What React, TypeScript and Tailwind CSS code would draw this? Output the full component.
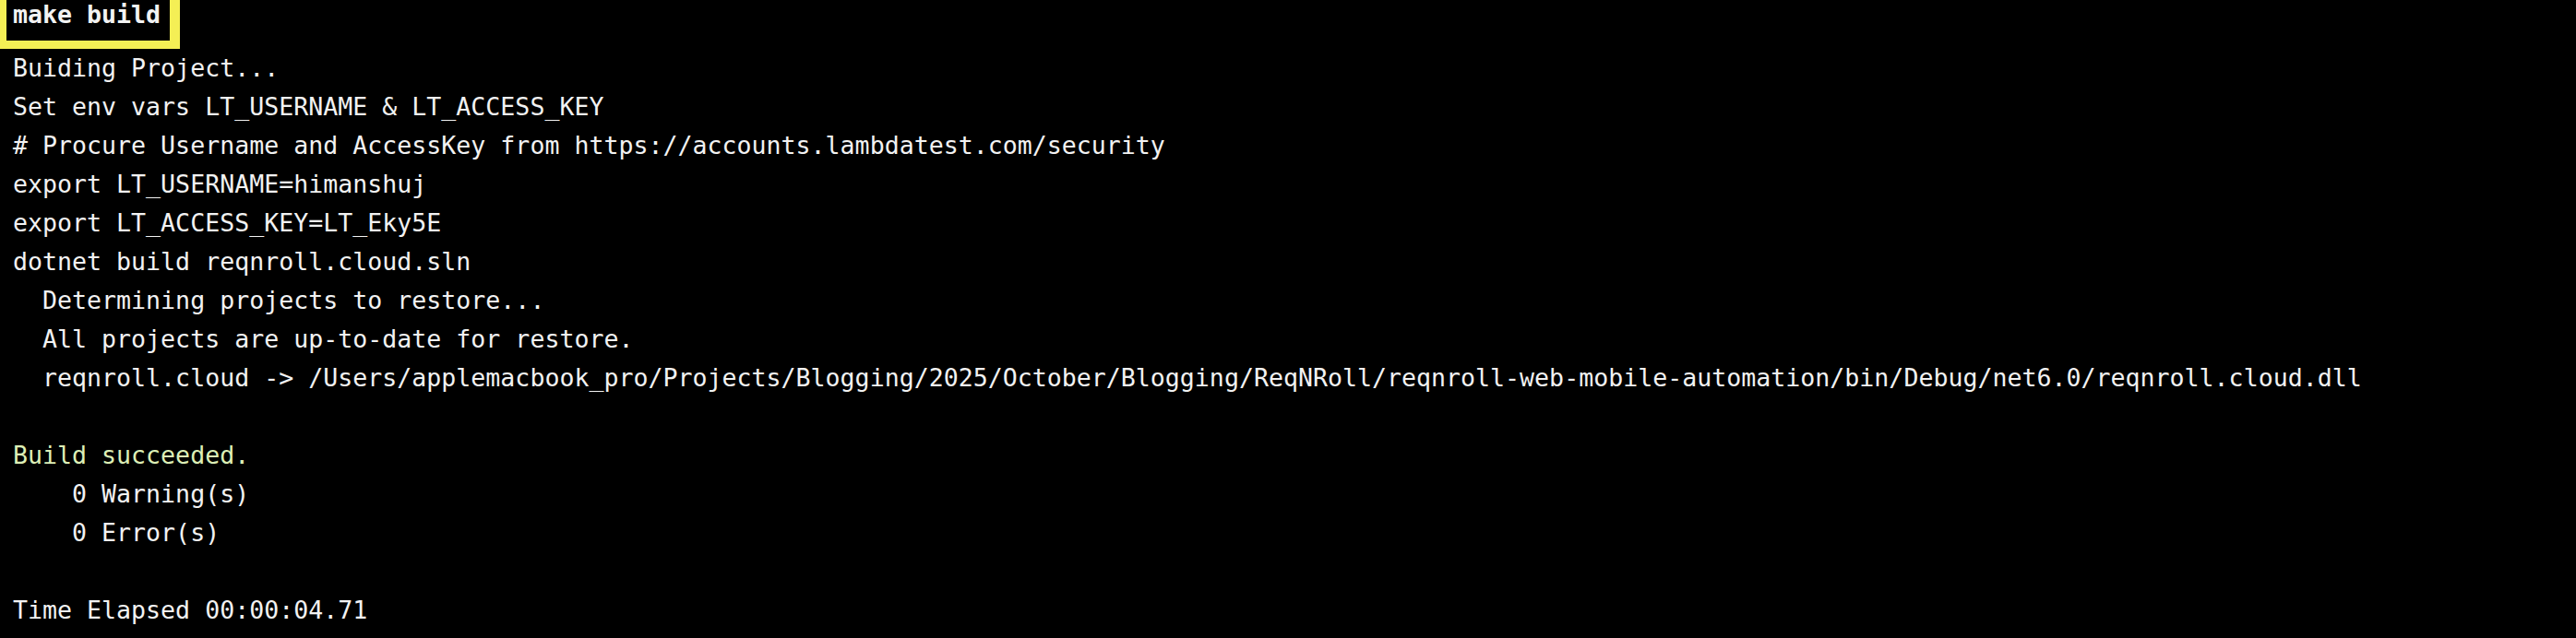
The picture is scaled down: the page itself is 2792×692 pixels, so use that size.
const lines: { text: string; green?: boolean }[] = [
  { text: "Buiding Project..." },
  { text: "Set env vars LT_USERNAME & LT_ACCESS_KEY" },
  { text: "# Procure Username and AccessKey from https://accounts.lambdatest.com/security" },
  { text: "export LT_USERNAME=himanshuj" },
  { text: "export LT_ACCESS_KEY=LT_Eky5E" },
  { text: "dotnet build reqnroll.cloud.sln" },
  { text: "  Determining projects to restore..." },
  { text: "  All projects are up-to-date for restore." },
  {
    text: "  reqnroll.cloud -> /Users/applemacbook_pro/Projects/Blogging/2025/October/Blogging/ReqNRoll/reqnroll-web-mobile-automation/bin/Debug/net6.0/reqnroll.cloud.dll",
  },
  { text: "" },
  { text: "Build succeeded.", green: true },
  { text: "    0 Warning(s)" },
  { text: "    0 Error(s)" },
  { text: "" },
  { text: "Time Elapsed 00:00:04.71" },
];

export default function App() {
  return (
    <div className="w-[2792px] h-[692px] overflow-hidden bg-black text-[#f2f2f2] font-['DejaVu_Sans_Mono','Liberation_Mono',monospace] text-[26.6px] leading-[42px]">
      {/* highlighted command */}
      <div className="-mt-[5px] w-[195px] border-l-[7px] border-r-[11px] border-b-[9px] border-[#f4ef55] pl-[7px] pb-[7px]">
        <span className="font-bold whitespace-pre">make build</span>
      </div>

      {/* output */}
      <div className="pl-[14px]">
        {lines.map((l, i) => (
          <div
            key={i}
            className={`h-[42px] whitespace-pre ${l.green ? "text-[#ddefb6]" : ""}`}
          >
            {l.text}
          </div>
        ))}
      </div>
    </div>
  );
}
